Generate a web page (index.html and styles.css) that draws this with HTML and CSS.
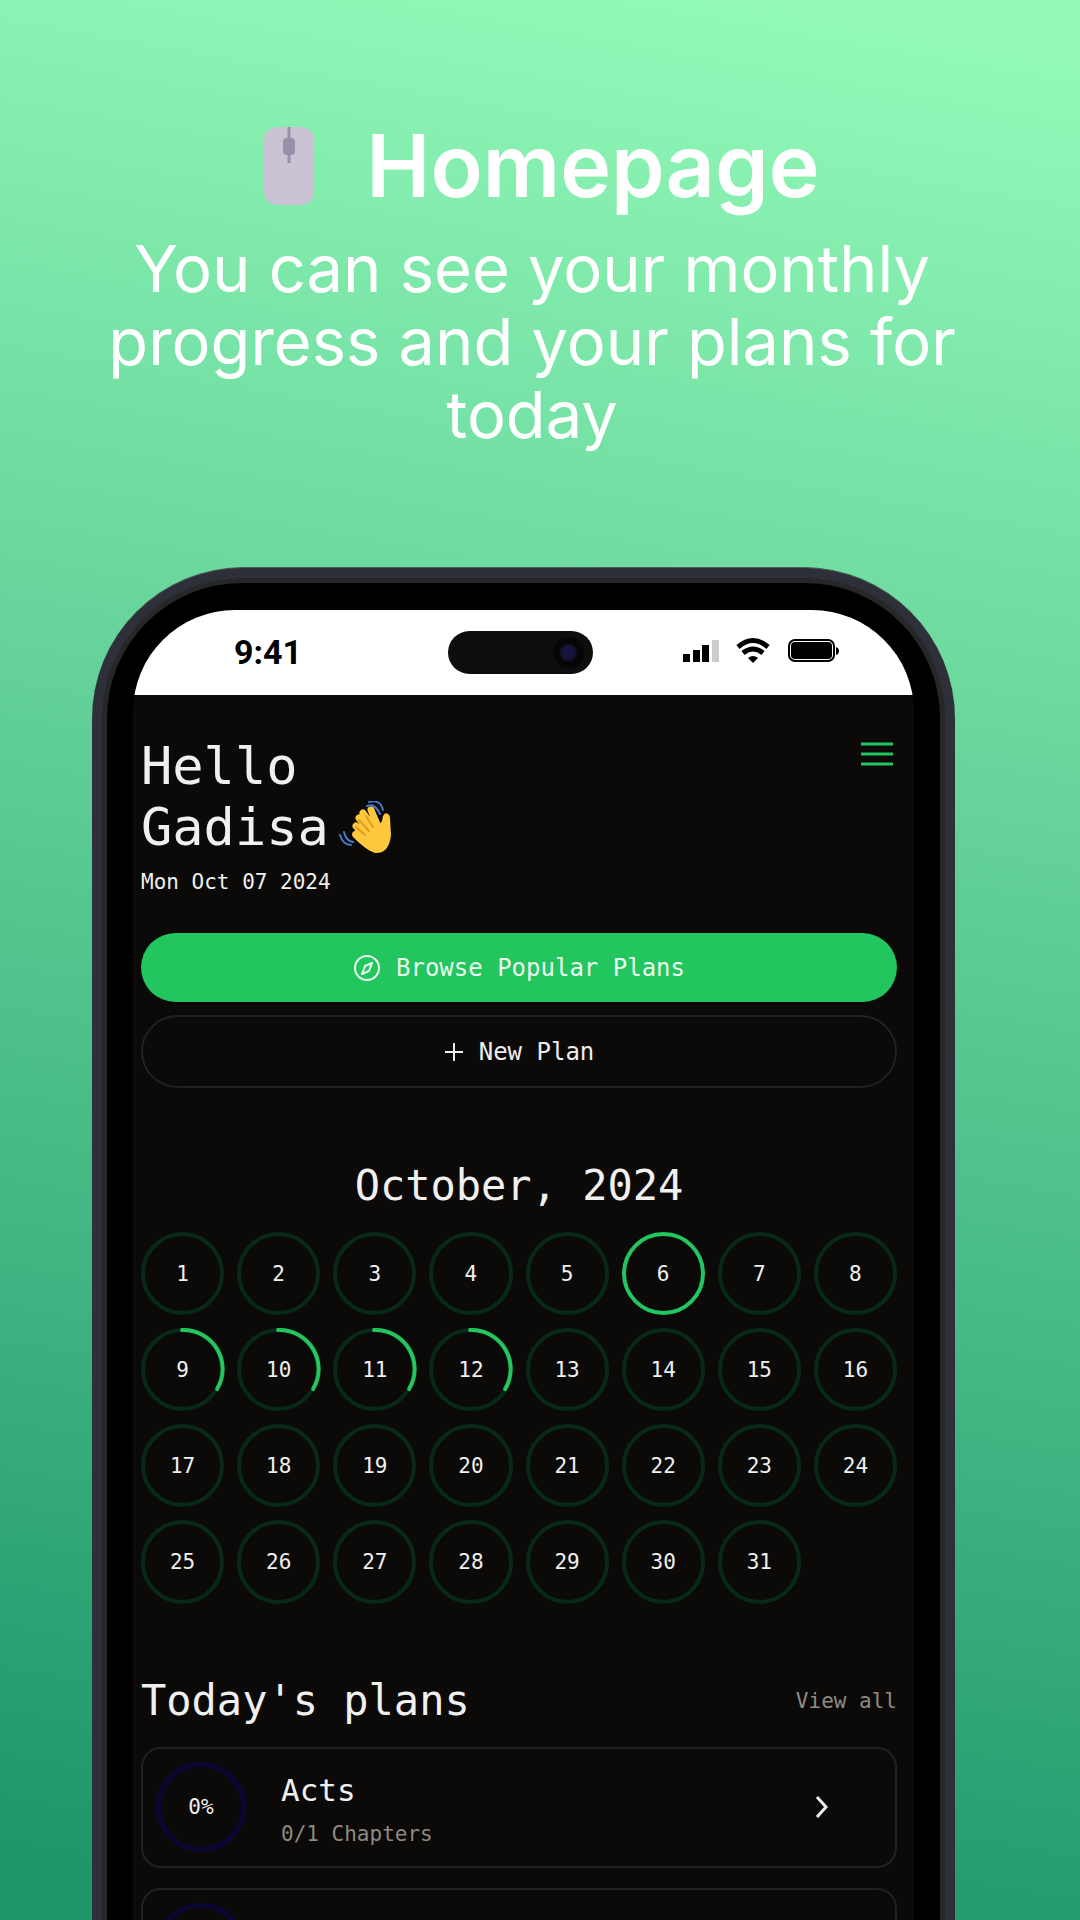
FILE: index.html
```html
<!DOCTYPE html>
<html lang="en">
<head>
<meta charset="utf-8">
<meta name="viewport" content="width=device-width, initial-scale=1">
<title>Homepage</title>
<link rel="stylesheet" href="styles.css">
</head>
<body>
<header class="promo">
  <h1 class="promo-title">
    <svg class="mouse" viewBox="0 0 50 78" aria-hidden="true"><rect width="50" height="78" rx="13" fill="#cbc2d4"/><path d="M25 0v36" stroke="#9a8fa8" stroke-width="3"/><rect x="19" y="11" width="12" height="17" rx="4" fill="#9a8fa8"/></svg>
    Homepage
  </h1>
  <p class="promo-text">You can see your monthly progress and your plans for today</p>
</header>
<div class="phone">
  <div class="bezel">
    <div class="screen">
      <div class="status">
        <span class="time">9:41</span>
        <span class="island"><span class="camera"></span></span>
        <svg class="signals" viewBox="0 0 158 26" aria-hidden="true">
          <path d="M1 17h7v8H1zM11 13h7v12h-7zM20 8h7v17h-7z"/><path fill="#ccc" d="M30 3h7v22h-7z"/>
          <g fill="none" stroke="#000" stroke-width="5"><path d="M56 10Q71-3 86 10"/><path d="M61 16Q71 8 81 16"/></g><path d="M66 21Q71 17 76 21L71 26z"/>
          <rect x="107" y="3" width="45" height="21" rx="6" fill="none" stroke="#000" stroke-width="2"/><rect x="109" y="5" width="41" height="17" rx="4"/><path d="M154 10q3 1 3 4t-3 4z"/>
        </svg>
      </div>
      <main class="app">
        <div class="greeting">
          <h2 class="hello">Hello<br>Gadisa<svg class="wave" viewBox="0 0 54 54" aria-hidden="true">
            <g fill="none" stroke="#ffc83d" stroke-linecap="round" stroke-width="7"><path d="M32 38L17 25M34 34L20 17M37 30L24 12M40 28L32 9"/></g>
            <path fill="#ffc83d" d="M14 31L35 14 40 24 43 20 44 15Q46 11 49 13Q51 14 51 17L52 34Q50 53 36 52Q28 50 14 36Q12 33 14 31z"/>
            <path d="M17 26l9 8M20 19l10 11M27 15l7 11" fill="none" stroke="#e59b20" stroke-width="2" stroke-linecap="round"/>
            <path d="M28 5q8-3 13 8M30 1q11-3 14 8M5 31q2 9 9 10M1 34q3 10 11 10" fill="none" stroke="#4379c9" stroke-width="2" stroke-linecap="round"/>
          </svg></h2>
          <button class="menu" aria-label="Menu"><svg viewBox="0 0 32 26" aria-hidden="true"><path d="M0 3h32M0 13h32M0 23h32" stroke="#22c55e" stroke-width="3"/></svg></button>
        </div>
        <p class="date">Mon Oct 07 2024</p>
        <div class="actions">
          <button class="btn primary"><svg class="compass" viewBox="0 0 28 28" aria-hidden="true"><g fill="none" stroke="currentColor" stroke-width="2" stroke-linejoin="round"><circle cx="14" cy="14" r="12"/><path d="M19 9l-3 8-7 3 3-8z"/></g></svg>Browse Popular Plans</button>
          <button class="btn outline"><svg class="plus" viewBox="0 0 20 20" aria-hidden="true"><path d="M10 1v18M1 10h18" stroke="currentColor" stroke-width="2"/></svg>New Plan</button>
        </div>
        <h2 class="month">October, 2024</h2>
        <ol class="days">
          <li>1</li><li>2</li><li>3</li><li>4</li><li>5</li><li class="full">6</li><li>7</li><li>8</li>
          <li>9<svg class="arc" viewBox="0 0 83 83" aria-hidden="true"><path d="M41 2A39 39 0 0 1 76 61"/></svg></li>
          <li>10<svg class="arc" viewBox="0 0 83 83" aria-hidden="true"><path d="M41 2A39 39 0 0 1 76 61"/></svg></li>
          <li>11<svg class="arc" viewBox="0 0 83 83" aria-hidden="true"><path d="M41 2A39 39 0 0 1 76 61"/></svg></li>
          <li>12<svg class="arc" viewBox="0 0 83 83" aria-hidden="true"><path d="M41 2A39 39 0 0 1 76 61"/></svg></li>
          <li>13</li><li>14</li><li>15</li><li>16</li>
          <li>17</li><li>18</li><li>19</li><li>20</li><li>21</li><li>22</li><li>23</li><li>24</li>
          <li>25</li><li>26</li><li>27</li><li>28</li><li>29</li><li>30</li><li>31</li>
        </ol>
        <div class="plans-head"><h2 class="plans-title">Today's plans</h2><a class="view-all" href="#">View all</a></div>
        <div class="plans">
          <a class="plan" href="#"><span class="ring">0%</span><span class="info"><span class="name">Acts</span><span class="chapters">0/1 Chapters</span></span><svg class="chevron" viewBox="0 0 14 24" aria-hidden="true"><path d="M2 2l9 10-9 10" fill="none" stroke="#eee" stroke-width="3"/></svg></a>
          <a class="plan" href="#" aria-label="Next plan"><span class="ring"></span></a>
        </div>
      </main>
    </div>
  </div>
</div>
</body>
</html>
```
FILE: styles.css
```css
* { box-sizing: border-box; margin: 0; padding: 0; }
body {
  height: 100vh; overflow: hidden;
  display: flex; flex-direction: column;
  background: linear-gradient(190deg, #92f9b8 3%, #1d966a 97%);
  font-family: Inter, "Liberation Sans", sans-serif; color: #fff;
}
.promo { padding: 112px 76px 0 80px; text-align: center; height: 567px; flex-shrink: 0; }
.promo-title { display: flex; justify-content: center; align-items: center; gap: 52px; font-size: 86px; line-height: 108px; font-weight: 600; }
.mouse { width: 50px; height: 78px; }
.promo-text { font-size: 65px; line-height: 73px; padding: 12px 20px 0 0; }
.phone {
  flex: none; margin: 0 125px 0 92px; padding: 10px 10px 0;
  background: #2d3038; border-radius: 152px 152px 0 0; border-top: 1px solid #4d5952;
}
.bezel { background: #000; border: solid #272727; border-width: 5px 5px 0; padding: 27px 26px 0; border-radius: 140px 140px 0 0; }
.screen { background: #0b0a09; border-radius: 102px 102px 0 0; overflow: hidden; }
.status { position: relative; height: 85px; background: #fff; color: #000; display: flex; justify-content: space-between; padding: 21px 74px 0 101px; }
.time { font: 700 34px/42px Roboto, sans-serif; }
.island { position: absolute; left: 50%; top: 21px; width: 145px; height: 43px; margin-left: -76px; border-radius: 22px; background: #0d0d0d; }
.camera { position: absolute; right: 9px; top: 6px; width: 31px; height: 31px; border-radius: 50%; background: radial-gradient(circle, #15153d 0 5px, #111126 8px, #060606 9px); }
.signals { width: 158px; height: 26px; margin-top: 6px; }
.app { padding: 41px 17px 0 8px; font-family: "DejaVu Sans Mono", "Liberation Mono", monospace; color: #f0f0ef; }
.greeting { display: flex; justify-content: space-between; align-items: flex-start; }
.hello { font-size: 52px; line-height: 61px; font-weight: 400; }
.wave { width: 54px; height: 54px; margin-left: 10px; vertical-align: -10px; }
.menu { border: 0; background: none; margin: 5px 4px 0 0; }
.menu svg { display: block; width: 32px; height: 26px; }
.date { font-size: 21px; line-height: 28px; padding-top: 10px; }
.actions { display: grid; gap: 13px; padding-top: 37px; }
.btn { display: flex; align-items: center; justify-content: center; font: inherit; font-size: 24px; color: #eafbf0; border: 0; border-radius: 37px; gap: 15px; }
.primary { height: 69px; background: #22c55e; }
.outline { height: 73px; background: none; border: 2px solid #222120; color: #eee; }
.compass { width: 28px; height: 28px; }
.plus { width: 20px; height: 20px; }
.month { font-size: 42px; line-height: 60px; font-weight: 400; text-align: center; padding-top: 68px; }
.days { list-style: none; display: grid; grid-template-columns: repeat(8, 1fr); gap: 13px; padding-top: 16px; }
.days li { position: relative; aspect-ratio: 1; display: flex; align-items: center; justify-content: center; border: 4px solid #082917; border-radius: 50%; font-size: 21px; }
.days .full { border-color: #22c55e; }
.arc { position: absolute; inset: -4px; overflow: visible; fill: none; stroke: #22c55e; stroke-width: 4; stroke-linecap: round; }
.plans-head { display: flex; justify-content: space-between; align-items: center; padding-top: 66px; }
.plans-title { font-size: 42px; line-height: 62px; font-weight: 400; }
.view-all { font-size: 21px; color: #918b83; text-decoration: none; }
.plans { display: grid; gap: 20px; padding-top: 15px; }
.plan { display: flex; align-items: center; height: 121px; border: 2px solid #222120; border-radius: 20px; padding: 0 66px 0 13px; color: inherit; text-decoration: none; }
.ring { width: 90px; height: 90px; border: 5px solid #0b0735; border-radius: 50%; display: flex; align-items: center; justify-content: center; font-size: 21px; }
.info { flex: 1; display: grid; padding: 8px 0 0 35px; }
.name { font-size: 31px; line-height: 46px; }
.chapters { font-size: 21px; line-height: 42px; color: #8f8981; }
.chevron { width: 14px; height: 24px; }
```
